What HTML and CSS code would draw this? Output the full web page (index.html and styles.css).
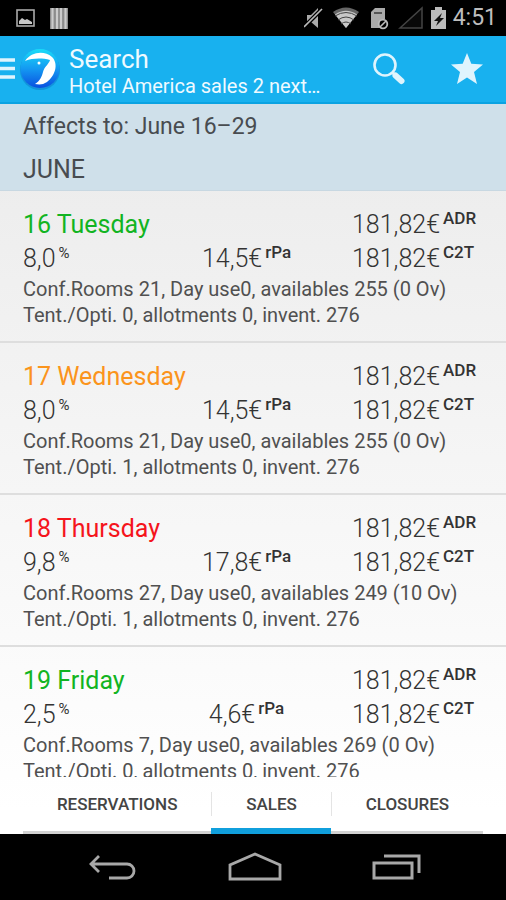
FILE: index.html
```html
<!DOCTYPE html>
<html lang="en">
<head>
<meta charset="utf-8">
<meta name="viewport" content="width=device-width, initial-scale=1">
<title>Search</title>
<link rel="stylesheet" href="styles.css">
</head>
<body>
<div class="status">
  <svg class="status-left" width="52" height="24" viewBox="0 0 52 24" aria-hidden="true">
    <rect x="1" y="4" width="17" height="16" fill="none" stroke="#aaa" stroke-width="1.6"/>
    <path d="M3 18v-3l3-3 3 2 2-1 5 3v2z" fill="#c8c8c8"/>
    <rect x="34" y="2" width="18" height="21" fill="#8c8c8c"/>
    <path d="M36.500 2v21M41 2v21M45 2v21M49.500 2v21" stroke="#ccc" stroke-width="2.200"/>
  </svg>
  <svg class="status-right" width="144" height="24" viewBox="0 0 144 24" aria-hidden="true">
    <path d="M3 9h4l7-7v20l-7-6H3z" fill="#aaa"/>
    <path d="M0 21L18 3" stroke="#000" stroke-width="4"/>
    <path d="M0 21L18 3" stroke="#bbb" stroke-width="1.600"/>
    <path d="M29 6Q42 -3 55 6L42 22z" fill="#666"/>
    <path d="M31 8.500Q42 1 53 8.500L42 22z" fill="#c8c8c8"/>
    <path d="M31 10Q42 3 53 10M34 14Q42 8 50 14M37 18Q42 14 47 18" fill="none" stroke="#444" stroke-width="1"/>
    <path d="M67 6l4-4h10v11a6 6 0 0 0-5 9h-9z" fill="#aaa"/>
    <path d="M70 7h8" stroke="#555" stroke-width="2"/>
    <circle cx="79" cy="18" r="4.300" fill="#000" stroke="#bbb" stroke-width="1.800"/>
    <path d="M76 21l6-6" stroke="#bbb" stroke-width="1.600"/>
    <path d="M96 22L118 2v20z" fill="#080808" stroke="#444" stroke-width="1.500"/>
    <path d="M127 4h4V1h7v3h4v19h-15z" fill="#bbb"/>
    <path d="M138 7l-8 8h4l-2 5 8-8h-4z" fill="#111"/>
  </svg>
  <span class="clock">4:51</span>
</div>

<header class="appbar">
  <button class="menu" aria-label="Open menu">
    <svg width="15" height="22" viewBox="0 0 15 22"><path d="M0 2h15M0 10.500h15M0 19h15" stroke="#dff4fd" stroke-width="3.400"/></svg>
  </button>
  <svg class="logo" width="42" height="42" viewBox="0 0 42 42" aria-hidden="true">
    <defs>
      <linearGradient id="ball" x1="0" y1="0" x2="0" y2="1">
        <stop offset="0" stop-color="#19dcf8"/><stop offset=".5" stop-color="#149af2"/><stop offset="1" stop-color="#0a50e0"/>
      </linearGradient>
    </defs>
    <circle cx="21" cy="22" r="20" fill="#0b78c8" opacity=".5"/>
    <circle cx="21" cy="20.500" r="19.500" fill="url(#ball)"/>
    <path d="M6 13C12 4 25 2 33 9c7 7 3 19-5 25-4 2.500-7 3-12 2 5-3 7-8 8-12 1-5 6-8 7-12-8-2-17-2-25 1z" fill="#fff"/>
    <circle cx="20" cy="15" r="1.500" fill="#fff"/>
  </svg>
  <div class="titles">
    <h1>Search</h1>
    <p>Hotel America sales 2 next…</p>
  </div>
  <button aria-label="Search">
    <svg width="34" height="34" viewBox="0 0 34 34"><circle cx="13" cy="13" r="10.500" fill="none" stroke="#dff4fd" stroke-width="2.600"/><path d="M20.500 20.500l4 4" stroke="#dff4fd" stroke-width="3"/><path d="M23.500 23.500l6 5.500" stroke="#dff4fd" stroke-width="6" stroke-linecap="round"/></svg>
  </button>
  <button aria-label="Favourite">
    <svg width="34" height="34" viewBox="0 0 34 34"><path d="M17 1l4.300 10.800L33 12.500l-9 7.600L27 32l-10-6.500L7 32l3-11.900-9-7.600 11.700-.7z" fill="#dff4fd"/></svg>
  </button>
</header>

<section class="period">
  <p>Affects to: June 16–29</p>
  <h2>JUNE</h2>
</section>

<main class="days">
  <article class="day">
    <div class="row"><h3 class="green">16 Tuesday</h3><span class="price">181,82€<sup>ADR</sup></span></div>
    <div class="row"><span class="pct">8,0<sup>%</sup></span><span class="rpa">14,5€<sup>rPa</sup></span><span class="price">181,82€<sup>C2T</sup></span></div>
    <p>Conf.Rooms 21, Day use0, availables 255 (0 Ov)</p>
    <p>Tent./Opti. 0, allotments 0, invent. 276</p>
  </article>
  <article class="day">
    <div class="row"><h3 class="orange">17 Wednesday</h3><span class="price">181,82€<sup>ADR</sup></span></div>
    <div class="row"><span class="pct">8,0<sup>%</sup></span><span class="rpa">14,5€<sup>rPa</sup></span><span class="price">181,82€<sup>C2T</sup></span></div>
    <p>Conf.Rooms 21, Day use0, availables 255 (0 Ov)</p>
    <p>Tent./Opti. 1, allotments 0, invent. 276</p>
  </article>
  <article class="day">
    <div class="row"><h3 class="red">18 Thursday</h3><span class="price">181,82€<sup>ADR</sup></span></div>
    <div class="row"><span class="pct">9,8<sup>%</sup></span><span class="rpa">17,8€<sup>rPa</sup></span><span class="price">181,82€<sup>C2T</sup></span></div>
    <p>Conf.Rooms 27, Day use0, availables 249 (10 Ov)</p>
    <p>Tent./Opti. 1, allotments 0, invent. 276</p>
  </article>
  <article class="day">
    <div class="row"><h3 class="green">19 Friday</h3><span class="price">181,82€<sup>ADR</sup></span></div>
    <div class="row"><span class="pct">2,5<sup>%</sup></span><span class="rpa">4,6€<sup>rPa</sup></span><span class="price">181,82€<sup>C2T</sup></span></div>
    <p>Conf.Rooms 7, Day use0, availables 269 (0 Ov)</p>
    <p>Tent./Opti. 0, allotments 0, invent. 276</p>
  </article>
</main>

<nav class="tabs">
  <button><span>RESERVATIONS</span></button>
  <button class="active"><span>SALES</span></button>
  <button><span>CLOSURES</span></button>
</nav>

<footer class="softkeys">
  <button aria-label="Back"><svg width="50" height="32" viewBox="0 0 50 32"><path d="M12 4L4 12l8 8M4 12h36a7 7 0 0 1 0 14H22" fill="none" stroke="#a8a8a8" stroke-width="2.800"/></svg></button>
  <button aria-label="Home"><svg width="54" height="32" viewBox="0 0 54 32"><path d="M2 27V13L27 2l25 11v14z" fill="none" stroke="#a8a8a8" stroke-width="2.800"/></svg></button>
  <button aria-label="Recent apps"><svg width="50" height="32" viewBox="0 0 50 32"><path d="M2 11h38v15H2zM12 4h35v17" fill="none" stroke="#a8a8a8" stroke-width="3"/></svg></button>
</footer>
</body>
</html>
```
FILE: styles.css
```css
* { box-sizing: border-box; margin: 0; padding: 0; }

body {
  display: flex;
  flex-direction: column;
  height: 100vh;
  overflow: hidden;
  font-family: Roboto, "Liberation Sans", sans-serif;
  color: #333;
  background: linear-gradient(#e8e8e8, #fff 90%);
}

button { border: 0; background: none; font: inherit; color: inherit; }
svg { display: block; }
h1, h2, h3 { font-size: inherit; font-weight: 400; }

.status {
  display: flex;
  align-items: center;
  flex: none;
  height: 36px;
  padding: 0 9px 0 16px;
  background: #000;
}
.status-right { margin-left: auto; }
.clock { margin-left: 5px; font-size: 23px; line-height: 38px; color: #bebebe; }

.appbar {
  display: flex;
  align-items: center;
  flex: none;
  height: 68px;
  padding-right: 22px;
  background: #18b1ef;
  border-bottom: 2px solid #0ba3e2;
  color: #effaff;
}
.logo { margin: 0 8px 0 4px; }
.titles { flex: 1; min-width: 0; padding-top: 6px; }
.titles h1 { font-size: 26px; line-height: 28px; }
.titles p { font-size: 20px; line-height: 26px; white-space: nowrap; }
.appbar button + button { margin-left: 44px; }

.period {
  flex: none;
  height: 87px;
  padding: 6px 23px 0;
  background: #cfe0ea;
  border-bottom: 1px solid #c8d8e2;
  color: #484c50;
}
.period p { font-size: 23px; line-height: 34px; }
.period h2 { font-size: 25px; line-height: 52px; }

.days { flex: 1; min-height: 0; overflow: hidden; }
.day {
  padding: 17px 23px 13px;
  border-bottom: 2px solid #dedede;
}
.row { display: flex; justify-content: space-between; font-size: 25px; line-height: 34px; }
.row span { font-weight: 300; }
.pct { flex: none; width: 118px; }
.rpa { flex: 1; text-align: center; }
.price { flex: none; width: 131px; }
sup { margin-left: 3px; font-size: 17px; line-height: 1; font-weight: 500; vertical-align: 9px; }
.pct sup { font-weight: 400; font-size: 15px; }
.day p { font-size: 20px; line-height: 26px; color: #505050; }
.green { color: #12b422; }
.orange { color: #fb941c; }
.red { color: #f5141c; }

.tabs { display: flex; flex: none; height: 57px; padding: 0 23px; }
.tabs button {
  flex: auto;
  border-bottom: 3px solid #d2d2d2;
  font-size: 17px;
  font-weight: 500;
  color: #444;
}
.tabs span { display: block; line-height: 24px; }
.tabs button + button span { border-left: 1px solid #e4e4e4; }
.tabs .active { padding-top: 3px; border-bottom: 6px solid #109fdc; }

.softkeys {
  display: flex;
  align-items: center;
  justify-content: space-between;
  flex: none;
  height: 66px;
  padding: 2px 84px 0 87px;
  background: #000;
}
```
